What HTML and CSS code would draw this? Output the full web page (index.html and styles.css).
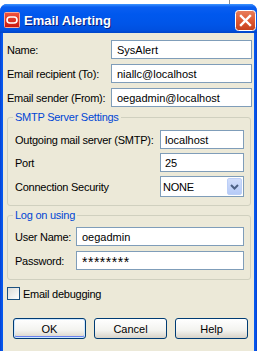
FILE: index.html
```html
<!DOCTYPE html>
<html lang="en">
<head>
    <meta charset="UTF-8">
    <title>Email Alerting</title>
    <link rel="stylesheet" href="styles.css">
</head>
<body>
    <div class="backdrop"></div>
    <div class="window">
        <div class="titlebar">
            <svg class="app-icon" width="16" height="16" viewBox="0 0 16 16">
                <defs>
                    <linearGradient id="iconRed" x1="0" y1="0" x2="0" y2="1">
                        <stop offset="0" stop-color="#f2553f"/>
                        <stop offset="1" stop-color="#c8160f"/>
                    </linearGradient>
                </defs>
                <rect x="0.5" y="0.5" width="15" height="15" rx="1" fill="url(#iconRed)" stroke="#f7a99a"/>
                <rect x="3" y="5" width="10" height="6" rx="3" fill="none" stroke="#fff" stroke-width="1.6"/>
            </svg>
            <span class="title">Email Alerting</span>
            <button class="close-btn" title="Close">
                <svg width="21" height="21" viewBox="0 0 21 21">
                    <defs>
                        <linearGradient id="closeRed" x1="0" y1="0" x2="0" y2="1">
                            <stop offset="0" stop-color="#e8805e"/>
                            <stop offset="0.5" stop-color="#df5a33"/>
                            <stop offset="1" stop-color="#c4401d"/>
                        </linearGradient>
                    </defs>
                    <rect x="0.5" y="0.5" width="20" height="20" rx="3" fill="url(#closeRed)" stroke="#fff"/>
                    <path d="M6 6 L15 15 M15 6 L6 15" stroke="#fff" stroke-width="2.4" stroke-linecap="square"/>
                </svg>
            </button>
        </div>

        <div class="dialog">
            <!-- General -->
            <div class="form-grid main-fields">
                <label for="name">Name:</label>
                <input type="text" id="name" value="SysAlert">
                <label for="recipient">Email recipient (To):</label>
                <input type="text" id="recipient" value="niallc@localhost">
                <label for="sender">Email sender (From):</label>
                <input type="text" id="sender" value="oegadmin@localhost">
            </div>

            <!-- SMTP -->
            <fieldset class="group smtp">
                <legend>SMTP Server Settings</legend>
                <div class="form-grid">
                    <label for="smtp">Outgoing mail server (SMTP):</label>
                    <input type="text" id="smtp" value="localhost">
                    <label for="port">Port</label>
                    <input type="text" id="port" value="25">
                    <label>Connection Security</label>
                    <div class="combo">
                        <span class="combo-value">NONE</span>
                        <span class="combo-btn">
                            <svg width="9" height="6" viewBox="0 0 9 6">
                                <path d="M1 1 L4.5 4.5 L8 1" fill="none" stroke="#4d6185" stroke-width="2"/>
                            </svg>
                        </span>
                    </div>
                </div>
            </fieldset>

            <!-- Log on -->
            <fieldset class="group logon">
                <legend>Log on using</legend>
                <div class="form-grid">
                    <label for="user">User Name:</label>
                    <input type="text" id="user" value="oegadmin">
                    <label for="pass">Password:</label>
                    <input type="text" id="pass" class="password" value="********">
                </div>
            </fieldset>

            <label class="check">
                <span class="checkbox"></span>
                Email debugging
            </label>

            <div class="buttons">
                <button class="btn default">OK</button>
                <button class="btn">Cancel</button>
                <button class="btn">Help</button>
            </div>
        </div>
    </div>
</body>
</html>
```

FILE: styles.css
```css
body {
    margin: 0;
    background: #ffffff;
    font-family: "Liberation Sans", Arial, sans-serif;
    font-size: 11px;
    letter-spacing: -0.25px;
    color: #000;
    overflow: hidden;
}

.backdrop {
    height: 4px;
}

.backdrop::before {
    content: '';
    display: block;
    margin-left: 229px;
    width: 1px;
    height: 4px;
    background: #8d8d8d;
}

.window {
    width: 257px;
    height: 347px;
    background: linear-gradient(to right, #0840d0, #0558ee 2px, #0558ee 255px, #0840d0);
    border-radius: 7px 7px 0 0;
    display: flex;
    flex-direction: column;
}

.titlebar {
    height: 29px;
    display: flex;
    align-items: center;
    padding-left: 4px;
    border-radius: 7px 7px 0 0;
    background: linear-gradient(#3d95ff 0, #0a5ef0 3px, #0058ee 10px, #0055e8 20px, #0050e0 26px, #0045c8 29px);
}

.app-icon {
    margin-top: 3px;
}

.title {
    margin-left: 4px;
    margin-top: 4px;
    color: #fff;
    font-weight: bold;
    font-size: 13px;
    letter-spacing: 0;
    text-shadow: 1px 1px 0 #0a1f80;
}

.close-btn {
    margin-left: auto;
    margin-right: 1px;
    margin-top: 4px;
    padding: 0;
    border: none;
    background: none;
    width: 21px;
    height: 21px;
}

.close-btn svg {
    display: block;
}

.dialog {
    flex: 1;
    margin: 0 3px;
    background: #ece9d8;
    padding: 7px 2px 0 4px;
}

.form-grid {
    display: grid;
    grid-template-columns: 104px 1fr;
    row-gap: 5px;
    align-items: center;
}

input[type="text"] {
    box-sizing: border-box;
    height: 19px;
    border: 1px solid #7f9db9;
    background: #fff;
    padding: 0 5px;
    font: inherit;
    color: #000;
    width: 100%;
    margin: 0;
    outline: none;
}

input.password {
    font-size: 14px;
    letter-spacing: 0.5px;
    padding-top: 3px;
}

.group {
    margin: 4px 1px 0 0;
    border: 1px solid #d0d0bf;
    border-radius: 3px;
    padding: 7px 6px 8px 7px;
    min-width: 0;
}

.group legend {
    color: #0046d5;
    line-height: 12px;
    padding: 0 2px;
    margin-left: -2px;
}

.smtp .form-grid {
    grid-template-columns: 145px 1fr;
    row-gap: 4px;
}

.smtp input[type="text"] {
    padding-left: 4px;
}

.logon {
    margin-top: 3px;
    padding-top: 6px;
    padding-bottom: 9px;
}

.logon .form-grid {
    grid-template-columns: 61px 1fr;
    row-gap: 5px;
}

.combo {
    box-sizing: border-box;
    height: 21px;
    border: 1px solid #7f9db9;
    background: #fff;
    display: flex;
    align-items: center;
}

.combo-value {
    flex: 1;
    padding-left: 2px;
}

.combo-btn {
    width: 15px;
    height: 17px;
    margin-right: 1px;
    border-radius: 2px;
    background: linear-gradient(#d2defb, #b6cbf7);
    border: 1px solid #bccff7;
    box-sizing: border-box;
    display: flex;
    align-items: center;
    justify-content: center;
}

.check {
    display: flex;
    align-items: center;
    margin-top: 7px;
    gap: 3px;
}

.checkbox {
    width: 13px;
    height: 13px;
    box-sizing: border-box;
    border: 1px solid #1c5180;
    background: linear-gradient(135deg, #dcdcd7, #ffffff);
}

.buttons {
    display: flex;
    gap: 8px;
    margin: 18px 0 0 6px;
}

.btn {
    width: 73px;
    height: 21px;
    border: 1px solid #003c74;
    border-radius: 3px;
    background: linear-gradient(#ffffff, #f3f3ef 60%, #d8d3c8);
    font: inherit;
    color: #000;
    padding: 0;
}

.btn.default {
    box-shadow: inset 0 0 0 1px #cee7ff, inset 0 -1px 0 1px #6982ee;
}
```
